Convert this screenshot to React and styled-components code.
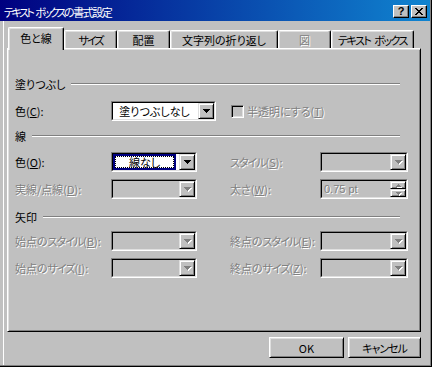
import React from 'react';
import styled, { createGlobalStyle } from 'styled-components';

const GlobalStyle = createGlobalStyle`
  body {
    margin: 0;
    background: #c0c0c0;
    font-family: "Noto Sans CJK JP", "Noto Sans", sans-serif;
    font-size: 11px;
    font-feature-settings: "palt";
    color: #000;
  }
`;

const DownArrow = ({ disabled }) => (
  <ArrowSvg width="7" height="4" viewBox="0 0 7 4" $disabled={disabled}>
    <path d="M0 0h7v1h-1v1h-1v1h-1v1h-1v-1h-1v-1h-1v-1h-1z" />
  </ArrowSvg>
);

const SmallArrow = ({ up }) => (
  <ArrowSvg width="5" height="3" viewBox="0 0 5 3" $disabled>
    {up ? (
      <path d="M2 0h1v1h1v1h1v1h-5v-1h1v-1h1z" />
    ) : (
      <path d="M0 0h5v1h-1v1h-1v1h-1v-1h-1v-1h-1z" />
    )}
  </ArrowSvg>
);

const Combo = ({ width, disabled, children }) => (
  <ComboOuter $w={width}>
    <ComboInner $disabled={disabled}>
      <ComboText>{children}</ComboText>
      <DropButton>
        <DownArrow disabled={disabled} />
      </DropButton>
    </ComboInner>
  </ComboOuter>
);

const App = () => (
  <>
    <GlobalStyle />
    <Dialog>
      <TitleBar>
        <Title>
          <Tight $ls={-2.5}>テキスト{'\u2002'}ボックス</Tight>
          <Tight $ls={-1.5}>の書式設定</Tight>
        </Title>
        <TitleButtons>
          <CaptionButton>?</CaptionButton>
          <CaptionButton>
            <svg width="8" height="7" viewBox="0 0 8 7" shapeRendering="crispEdges">
              <path d="M0 0h2v1h1v1h2v-1h1v-1h2v1h-1v1h-1v1h-1v1h1v1h1v1h1v1h-2v-1h-1v-1h-2v1h-1v1h-2v-1h1v-1h1v-1h1v-1h-1v-1h-1v-1h-1z" />
            </svg>
          </CaptionButton>
        </TitleButtons>
      </TitleBar>
      <Body>
        <Tabs>
          <Tab $w={56} $active>色と線</Tab>
          <Tab $w={53} $ls={-2}>サイズ</Tab>
          <Tab $w={53}>配置</Tab>
          <Tab $w={108}>文字列の折り返し</Tab>
          <Tab $w={53} $disabled>図</Tab>
          <Tab $w={83} $ls={-1.5}>テキスト{'\u2002'}ボックス</Tab>
        </Tabs>
        <Panel>
          <Header>
            <span>塗りつぶし</span>
            <HeaderLine />
          </Header>
          <Row $mt={10}>
            <Label $w={96}>
              色(<u>C</u>):
            </Label>
            <Combo width={105}>塗りつぶしなし</Combo>
            <CheckBox />
            <Label $disabled>
              半透明にする(<u>T</u>)
            </Label>
          </Row>

          <Header $mt={8}>
            <span>線</span>
            <HeaderLine />
          </Header>
          <Row $mt={9}>
            <Label $w={96}>
              色(<u>O</u>):
            </Label>
            <ComboOuter $w={86}>
              <ComboInner>
                <ComboText>
                  <FocusItem>
                    <FocusRect>線なし</FocusRect>
                  </FocusItem>
                </ComboText>
                <DropButton>
                  <DownArrow />
                </DropButton>
              </ComboInner>
            </ComboOuter>
            <Label $w={90} $ml={33} $disabled>
              <Tight $ls={-1}>スタイル</Tight>(<u>S</u>):
            </Label>
            <Combo width={88} disabled />
          </Row>
          <Row $mt={7}>
            <Label $w={96} $disabled>
              実線/点線(<u>D</u>):
            </Label>
            <Combo width={86} disabled />
            <Label $w={90} $ml={33} $disabled>
              太さ(<u>W</u>):
            </Label>
            <ComboOuter $w={88}>
              <ComboInner $disabled>
                <SpinText>0.75 pt</SpinText>
                <SpinButtons>
                  <SpinButton>
                    <SmallArrow up />
                  </SpinButton>
                  <SpinButton>
                    <SmallArrow />
                  </SpinButton>
                </SpinButtons>
              </ComboInner>
            </ComboOuter>
          </Row>

          <Header $mt={11}>
            <span>矢印</span>
            <HeaderLine />
          </Header>
          <Row $mt={7}>
            <Label $w={96} $disabled>
              始点の<Tight $ls={-1}>スタイル</Tight>(<u>B</u>):
            </Label>
            <Combo width={86} disabled />
            <Label $w={90} $ml={33} $disabled>
              終点の<Tight $ls={-1}>スタイル</Tight>(<u>E</u>):
            </Label>
            <Combo width={88} disabled />
          </Row>
          <Row $mt={7}>
            <Label $w={96} $disabled>
              始点の<Tight $ls={-1}>サイズ</Tight>(<u>I</u>):
            </Label>
            <Combo width={86} disabled />
            <Label $w={90} $ml={33} $disabled>
              終点の<Tight $ls={-1}>サイズ</Tight>(<u>Z</u>):
            </Label>
            <Combo width={88} disabled />
          </Row>
        </Panel>
        <Footer>
          <Button $w={75}>OK</Button>
          <Button $w={73}>
            <Tight $ls={-1}>キャンセル</Tight>
          </Button>
        </Footer>
      </Body>
    </Dialog>
  </>
);

export default App;

const Dialog = styled.div`
  width: 432px;
  height: 367px;
  box-sizing: border-box;
  padding: 0 2px 2px 0;
  background: #c0c0c0;
  box-shadow: inset -1px -1px 0 #000, inset -2px -2px 0 #808080;
  display: flex;
  flex-direction: column;
`;

const TitleBar = styled.div`
  height: 21px;
  flex: none;
  display: flex;
  align-items: center;
  padding: 2px 3px 0 4px;
  box-sizing: border-box;
  background: linear-gradient(to right, #000080, #1084d0);
`;

const Title = styled.div`
  flex: 1;
  color: #fff;
  white-space: nowrap;
  line-height: 14px;
`;

const Tight = styled.span`
  letter-spacing: ${(p) => p.$ls}px;
`;

const TitleButtons = styled.div`
  display: flex;
  gap: 2px;
`;

const CaptionButton = styled.div`
  width: 16px;
  height: 13px;
  box-sizing: border-box;
  background: #c0c0c0;
  border: 1px solid;
  border-color: #fff #000 #000 #fff;
  box-shadow: inset -1px -1px 0 #808080;
  display: flex;
  align-items: center;
  justify-content: center;
  font-family: "Liberation Sans", sans-serif;
  font-weight: bold;
  font-size: 11px;
  line-height: 1;
`;

const Body = styled.div`
  flex: 1;
  display: flex;
  flex-direction: column;
  padding: 6px 9px 0 7px;
  box-shadow: inset 3px 0 0 #c0c0c0, inset 4px 0 0 #fff;
`;

const Tabs = styled.div`
  display: flex;
  align-items: flex-end;
  height: 21px;
  padding-left: 1px;
  position: relative;
  z-index: 1;
`;

const Tab = styled.div`
  width: ${(p) => p.$w}px;
  height: ${(p) => (p.$active ? 23 : 18)}px;
  margin-bottom: ${(p) => (p.$active ? -2 : 0)}px;
  box-sizing: border-box;
  flex: none;
  display: flex;
  align-items: center;
  justify-content: center;
  padding-bottom: ${(p) => (p.$active ? 2 : 0)}px;
  background: #c0c0c0;
  border-top: 1px solid #fff;
  border-left: 1px solid #fff;
  border-right: 1px solid #000;
  border-radius: 2px 2px 0 0;
  box-shadow: inset -1px 0 0 #808080, inset 1px 1px 0 #dfdfdf;
  white-space: nowrap;
  letter-spacing: ${(p) => p.$ls || 0}px;
  color: ${(p) => (p.$disabled ? '#808080' : '#000')};
  text-shadow: ${(p) => (p.$disabled ? '1px 1px 0 #fff' : 'none')};
`;

const Panel = styled.div`
  height: 284px;
  box-sizing: border-box;
  flex: none;
  border: 1px solid;
  border-color: #fff #000 #000 #fff;
  box-shadow: inset 1px 1px 0 #dfdfdf, inset -1px -1px 0 #808080;
  padding: 28px 11px 0 7px;
  display: flex;
  flex-direction: column;
`;

const Header = styled.div`
  height: 14px;
  margin-top: ${(p) => p.$mt || 0}px;
  display: flex;
  align-items: center;
  white-space: nowrap;
`;

const HeaderLine = styled.div`
  flex: 1;
  height: 0;
  border-top: 1px solid #808080;
  border-bottom: 1px solid #fff;
  margin: 0 9px 0 6px;
`;

const Row = styled.div`
  height: 20px;
  margin-top: ${(p) => p.$mt || 0}px;
  display: flex;
  align-items: center;
`;

const Label = styled.div`
  width: ${(p) => (p.$w ? `${p.$w}px` : 'auto')};
  margin-left: ${(p) => p.$ml || 0}px;
  flex: none;
  white-space: nowrap;
  color: ${(p) => (p.$disabled ? '#808080' : '#000')};
  text-shadow: ${(p) => (p.$disabled ? '1px 1px 0 #fff' : 'none')};
  u {
    text-underline-offset: 1px;
  }
`;

const ComboOuter = styled.div`
  width: ${(p) => p.$w}px;
  height: 20px;
  box-sizing: border-box;
  flex: none;
  border: 1px solid;
  border-color: #808080 #fff #fff #808080;
`;

const ComboInner = styled.div`
  height: 100%;
  box-sizing: border-box;
  border: 1px solid;
  border-color: #000 #dfdfdf #dfdfdf #000;
  background: ${(p) => (p.$disabled ? '#c0c0c0' : '#fff')};
  display: flex;
`;

const ComboText = styled.div`
  flex: 1;
  display: flex;
  align-items: center;
  justify-content: center;
  white-space: nowrap;
  overflow: hidden;
  padding-right: 2px;
`;

const FocusItem = styled.div`
  flex: 1;
  align-self: stretch;
  display: flex;
  border: 2px solid #000080;
  margin-right: 1px;
`;

const FocusRect = styled.div`
  flex: 1;
  display: flex;
  align-items: center;
  justify-content: center;
  border: 1px dotted #000;
  line-height: 1;
`;

const DropButton = styled.div`
  width: 16px;
  height: 16px;
  box-sizing: border-box;
  flex: none;
  background: #c0c0c0;
  border: 1px solid;
  border-color: #dfdfdf #000 #000 #dfdfdf;
  box-shadow: inset 1px 1px 0 #fff, inset -1px -1px 0 #808080;
  display: flex;
  align-items: center;
  justify-content: center;
`;

const ArrowSvg = styled.svg`
  shape-rendering: crispEdges;
  fill: ${(p) => (p.$disabled ? '#808080' : '#000')};
  filter: ${(p) => (p.$disabled ? 'drop-shadow(1px 1px 0 #fff)' : 'none')};
`;

const SpinText = styled.div`
  flex: 1;
  display: flex;
  align-items: center;
  padding-left: 2px;
  color: #808080;
  text-shadow: 1px 1px 0 #fff;
  font-family: "Liberation Sans", sans-serif;
  font-size: 11px;
`;

const SpinButtons = styled.div`
  width: 16px;
  display: flex;
  flex-direction: column;
`;

const SpinButton = styled.div`
  flex: 1;
  box-sizing: border-box;
  background: #c0c0c0;
  border: 1px solid;
  border-color: #dfdfdf #000 #000 #dfdfdf;
  box-shadow: inset 1px 1px 0 #fff, inset -1px -1px 0 #808080;
  display: flex;
  align-items: center;
  justify-content: center;
`;

const CheckBox = styled.div`
  width: 13px;
  height: 13px;
  box-sizing: border-box;
  flex: none;
  margin: 0 3px 0 15px;
  border: 1px solid;
  border-color: #808080 #fff #fff #808080;
  box-shadow: inset 1px 1px 0 #000, inset -1px -1px 0 #dfdfdf;
  background: #c0c0c0;
`;

const Footer = styled.div`
  display: flex;
  justify-content: flex-end;
  gap: 4px;
  margin-top: 5px;
`;

const Button = styled.button`
  width: ${(p) => p.$w}px;
  height: 21px;
  box-sizing: border-box;
  padding: 0;
  background: #c0c0c0;
  border: 1px solid;
  border-color: #fff #000 #000 #fff;
  box-shadow: inset 1px 1px 0 #dfdfdf, inset -1px -1px 0 #808080;
  font-family: inherit;
  font-size: 11px;
  font-feature-settings: "palt";
  color: #000;
`;
